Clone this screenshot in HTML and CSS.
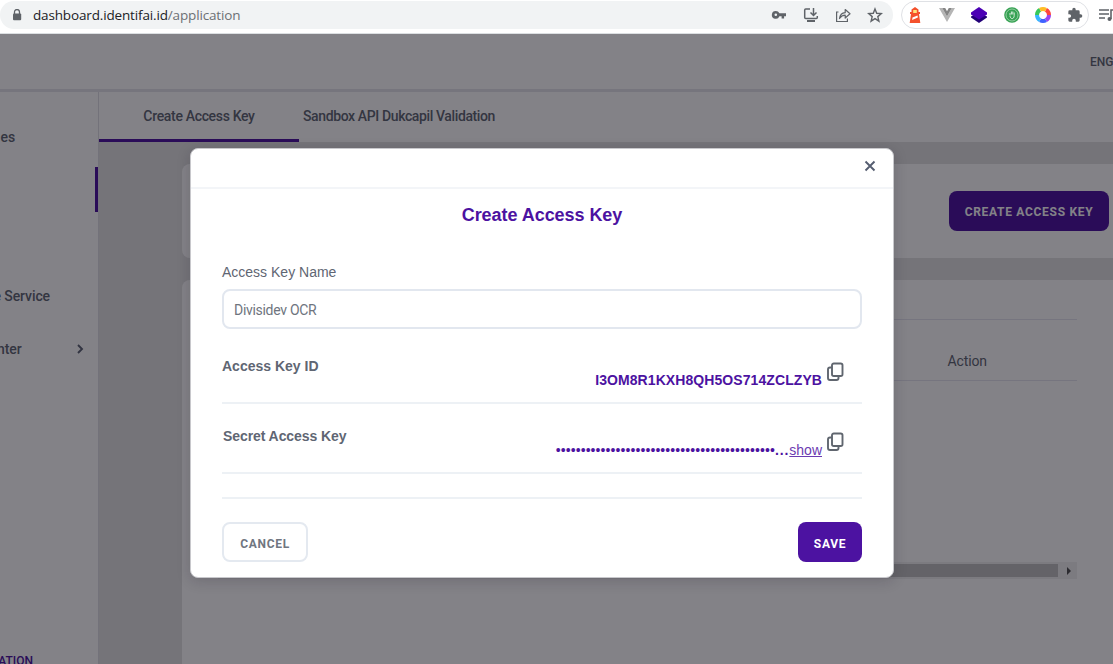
FILE: index.html
```html
<!DOCTYPE html>
<html lang="en">
<head>
  <meta charset="UTF-8">
  <meta name="viewport" content="width=device-width, initial-scale=1.0">
  <title>Create Access Key</title>
  <link rel="stylesheet" href="styles.css">
</head>
<body>
  <div class="browser-bar">
    <div class="address">
      <svg class="lock" width="10" height="12" viewBox="0 0 10 12"><path d="M2.500 5V3a2.500 2.500 0 0 1 5 0v2" fill="none" stroke="#5f6368" stroke-width="1.300"/><rect x="1" y="4.500" width="8.200" height="6.800" rx="1" fill="#5f6368"/></svg>
      <span class="url">dashboard.identifai.id<span class="path">/application</span></span>
      <div class="address-icons">
        <svg width="16" height="16" viewBox="0 0 16 16"><path fill="#5f6368" fill-rule="evenodd" d="M4.800 4a3.900 3.900 0 1 0 3.600 5.200h2.200V11.500h2.500V9.200H15V6.200H8.400A3.900 3.900 0 0 0 4.800 4zm0 2.500a1.300 1.300 0 1 1 0 2.600 1.300 1.300 0 0 1 0-2.600z"/></svg>
        <svg width="16" height="16" viewBox="0 0 16 16" fill="none" stroke="#5f6368" stroke-width="1.500"><path d="M7 2H2.700Q1.700 2 1.700 3v7.500q0 1 1 1h10.600q1 0 1-1V9"/><path d="M10.500 1v7M7.500 5.500l3 3 3-3"/><path d="M4 14h8" stroke-width="2"/></svg>
        <svg width="16" height="16" viewBox="0 0 16 16" fill="none" stroke="#5f6368" stroke-width="1.200"><path d="M3.500 5H1.600v9.500h10.800v-3"/><path d="M4.500 11.500C5 7.800 7 6 10.200 5.700V2.500L15 6.800l-4.800 4.200V8.200C7.500 8.200 6 9.200 4.500 11.500z" stroke-linejoin="round"/></svg>
        <svg width="16" height="16" viewBox="0 0 16 16"><path fill="none" stroke="#5f6368" stroke-width="1.400" d="M8 2l1.700 4.300 4.600.3-3.500 3 1.100 4.500L8 11.600l-3.900 2.500 1.100-4.500-3.500-3 4.600-.3z"/></svg>
      </div>
    </div>
    <div class="extensions">
      <svg width="16" height="18" viewBox="0 0 16 18"><path fill="#f4512c" d="M8 1l3.500 2.500V6H13v2h-1l1.300 9H2.700L4 8H3V6h1.500V3.500z"/><path fill="#ffe27a" d="M6.200 4h3.600v3H6.200z"/><path fill="#fff" d="M5.500 11.500l5-2 .4 2-5.800 2.500z"/></svg>
      <svg width="16" height="16" viewBox="0 0 16 16"><path fill="#b5b5b5" d="M0 1h3.200L8 9.500 12.800 1H16L8 15z"/><path fill="#858585" d="M3.200 1h3L8 4.200 9.800 1h3L8 9.500z"/></svg>
      <svg width="18" height="18" viewBox="0 0 18 18"><path fill="#230078" d="M1 10.500l3-1.500h10l3 1.500v1L9 17l-8-5.500z"/><path fill="#4b00b5" d="M9 1l8 5.500v2L9 13.500 1 8.500v-2z"/></svg>
      <svg width="16" height="16" viewBox="0 0 16 16"><circle cx="8" cy="8" r="7.800" fill="#35a152"/><circle cx="8" cy="8" r="6" fill="none" stroke="#b9e0c2" stroke-width="0.700"/><path d="M6 8V6M7.400 7.500v-3M8.800 7.500v-3M10.200 8.500V5.500M6 8.500c0 4 4.200 4.200 4.200 0" fill="none" stroke="#e4f4e8" stroke-width="0.900"/></svg>
      <svg width="16" height="16" viewBox="0 0 16 16" fill="none" stroke-width="4"><circle cx="8" cy="8" r="6" stroke="#ff453c" pathLength="6" stroke-dasharray="1 5" stroke-dashoffset="1"/><circle cx="8" cy="8" r="6" stroke="#9a45ee" pathLength="6" stroke-dasharray="1 5"/><circle cx="8" cy="8" r="6" stroke="#3f62ff" pathLength="6" stroke-dasharray="1 5" stroke-dashoffset="-1"/><circle cx="8" cy="8" r="6" stroke="#36b5ff" pathLength="6" stroke-dasharray="1 5" stroke-dashoffset="-2"/><circle cx="8" cy="8" r="6" stroke="#37c85a" pathLength="6" stroke-dasharray="1 5" stroke-dashoffset="-3"/><circle cx="8" cy="8" r="6" stroke="#ffbd24" pathLength="6" stroke-dasharray="1 5" stroke-dashoffset="-4"/></svg>
      <svg width="16" height="16" viewBox="0 0 24 24"><path fill="#5f6368" d="M20.500 11H19V7a2 2 0 0 0-2-2h-4V3.500a2.500 2.500 0 0 0-5 0V5H4a2 2 0 0 0-2 2v3.800h1.500a2.700 2.700 0 0 1 0 5.400H2V20a2 2 0 0 0 2 2h3.800v-1.500a2.700 2.700 0 0 1 5.400 0V22H17a2 2 0 0 0 2-2v-4h1.500a2.500 2.500 0 0 0 0-5z"/></svg>
    </div>
    <svg class="playlist" width="15" height="14" viewBox="0 0 15 14"><path d="M0 2h10M0 6h10M0 10h6" stroke="#5f6368" stroke-width="1.600"/><circle cx="10.500" cy="11" r="2" fill="#5f6368"/><path d="M12 11V2h3" fill="none" stroke="#5f6368" stroke-width="1.600"/></svg>
  </div>

  <div class="app">
    <header class="header"><span>ENG</span></header>
    <div class="layout">
      <aside class="sidebar">
        <div class="menu-item services">es</div>
        <div class="menu-active"></div>
        <div class="menu-item online">e Service</div>
        <div class="menu-item center">
          <span>nter</span>
          <svg width="8" height="10" viewBox="0 0 8 10"><path d="M2 1l4 4-4 4" fill="none" stroke="#5d6374" stroke-width="1.900"/></svg>
        </div>
        <div class="menu-heading">ATION</div>
      </aside>
      <main class="main">
        <nav class="tabs">
          <a class="tab active"><span>Create Access Key</span></a>
          <a class="tab second"><span>Sandbox API Dukcapil Validation</span></a>
        </nav>
        <div class="content">
          <section class="card top-card">
            <button class="btn create">CREATE ACCESS KEY</button>
          </section>
          <section class="card table-card">
            <div class="table-head"><span>Action</span></div>
            <div class="scrollbar"><div class="thumb"></div><i class="arrow"></i></div>
          </section>
        </div>
      </main>
    </div>

    <div class="backdrop">
      <div class="modal">
        <div class="modal-header">
          <svg width="12" height="12" viewBox="0 0 12 12"><path d="M1.500 1.500l9 9M10.500 1.500l-9 9" stroke="#555d70" stroke-width="1.900"/></svg>
        </div>
        <div class="modal-body">
          <h2>Create Access Key</h2>
          <label for="keyName">Access Key Name</label>
          <input type="text" id="keyName" value="Divisidev OCR">
          <div class="key-row">
            <strong>Access Key ID</strong>
            <div class="key-value">
              <span class="key-id">I3OM8R1KXH8QH5OS714ZCLZYB</span>
              <svg class="copy" width="18" height="20" viewBox="0 0 18 20" fill="none" stroke="#60666f" stroke-width="1.900"><rect x="6" y="1.500" width="10.500" height="12.500" rx="1.800"/><path d="M6 5.500H4Q2 5.500 2 7.500V16Q2 18 4 18h6.500Q12.500 18 12.500 16V14"/></svg>
            </div>
          </div>
          <div class="key-row secret">
            <strong>Secret Access Key</strong>
            <div class="key-value">
              <span class="dots">••••••••••••••••••••••••••••••••••••••••••••</span><span class="ellipsis">...</span><a class="show">show</a>
              <svg class="copy" width="18" height="20" viewBox="0 0 18 20" fill="none" stroke="#60666f" stroke-width="1.900"><rect x="6" y="1.500" width="10.500" height="12.500" rx="1.800"/><path d="M6 5.500H4Q2 5.500 2 7.500V16Q2 18 4 18h6.500Q12.500 18 12.500 16V14"/></svg>
            </div>
          </div>
          <div class="modal-footer">
            <button class="btn cancel">CANCEL</button>
            <button class="btn save">SAVE</button>
          </div>
        </div>
      </div>
    </div>
  </div>
</body>
</html>
```
FILE: styles.css
```css
* {
  box-sizing: border-box;
}

body {
  margin: 0;
  height: 664px;
  overflow: hidden;
  font-family: Roboto, "Liberation Sans", sans-serif;
  font-size: 14px;
  color: #5f6673;
  background: #fff;
}

svg {
  display: block;
  flex-shrink: 0;
}

.browser-bar {
  height: 34px;
  padding-top: 1px;
  display: flex;
  align-items: flex-start;
  border-bottom: 1px solid #dcdfe2;
}

.address {
  width: 893px;
  flex-shrink: 0;
  height: 28px;
  padding: 0 10px 0 12px;
  display: flex;
  align-items: center;
  background: #f1f3f4;
  border-radius: 14px;
}

.url {
  margin-left: 11px;
  font-family: "Open Sans", "Noto Sans", sans-serif;
  font-size: 13.5px;
  letter-spacing: -0.15px;
  color: #202124;
}

.path {
  color: #6c7075;
}

.address-icons {
  margin-left: auto;
  display: flex;
  gap: 16px;
}

.extensions {
  width: 188px;
  flex-shrink: 0;
  height: 28px;
  margin-left: 8px;
  padding: 0 5px;
  display: flex;
  align-items: center;
  justify-content: space-between;
  border: 1px solid #dfe1e5;
  border-radius: 14px;
}

.playlist {
  margin: 7px 0 0 10px;
}

.app {
  position: relative;
  height: 630px;
  overflow: hidden;
}

.header {
  height: 58px;
  padding: 21px 0 0 1090px;
  border-bottom: 3px solid #e5e5eb;
  font-size: 12px;
  font-weight: 500;
  line-height: 14px;
}

.layout {
  display: flex;
  height: 572px;
}

.sidebar {
  width: 99px;
  flex-shrink: 0;
  overflow: hidden;
  border-right: 1px solid #dedee4;
  display: flex;
  flex-direction: column;
}

.menu-item {
  height: 20px;
  flex-shrink: 0;
  line-height: 20px;
  font-weight: 500;
  letter-spacing: -0.1px;
  white-space: nowrap;
  display: flex;
}

.services {
  width: 15px;
  margin-top: 35px;
  justify-content: flex-end;
}

.menu-active {
  width: 3px;
  height: 45px;
  flex-shrink: 0;
  margin-top: 20px;
  align-self: flex-end;
  background: #4c12a1;
}

.online {
  width: 50px;
  margin-top: 74px;
  justify-content: flex-end;
}

.center {
  margin: 33px 14px 0 -3px;
  align-items: center;
  justify-content: space-between;
}

.menu-heading {
  width: 33px;
  margin-top: 295px;
  display: flex;
  justify-content: flex-end;
  font-size: 12px;
  font-weight: 500;
  line-height: 14px;
  color: #4c12a1;
}

.main {
  flex: 1;
  min-width: 0;
  background: #e3e3e3;
}

.tabs {
  height: 50px;
  display: flex;
  background: #fff;
}

.tab {
  width: 200px;
  line-height: 49px;
  font-weight: 500;
  letter-spacing: -0.33px;
  text-align: center;
  white-space: nowrap;
}

.tab.active {
  border-bottom: 3px solid #4c12a1;
}

.tab.second {
  text-align: left;
  padding-left: 4px;
  letter-spacing: -0.38px;
}

.content {
  padding: 22px 0 0 83px;
}

.card {
  background: #fff;
  border-radius: 8px 0 0 8px;
}

.top-card {
  height: 94px;
  padding: 27px 4px 0 0;
  display: flex;
  justify-content: flex-end;
}

.btn {
  height: 40px;
  padding: 2px 0 0;
  border: none;
  border-radius: 8px;
  font-family: Roboto, sans-serif;
  font-size: 12px;
  font-weight: 700;
  letter-spacing: 0.7px;
  cursor: pointer;
}

.create {
  width: 160px;
  color: #fff;
  background: #4c12a1;
}

.table-card {
  height: 400px;
  margin-top: 22px;
  padding: 39px 36px 0 36px;
}

.table-head {
  height: 62px;
  padding: 32px 90px 0 0;
  line-height: 18px;
  text-align: right;
  letter-spacing: -0.1px;
  border-top: 1px solid #e4e4ee;
  border-bottom: 1px solid #e4e4ee;
}

.scrollbar {
  height: 17px;
  margin-top: 181px;
  display: flex;
  align-items: center;
  background: #f1f1f1;
}

.thumb {
  width: 840px;
  height: 13px;
  background: #c1c1c1;
}

.arrow {
  margin-left: 9px;
  border-left: 4px solid #505050;
  border-top: 4px solid transparent;
  border-bottom: 4px solid transparent;
}

.backdrop {
  position: absolute;
  inset: 0;
  display: flex;
  justify-content: center;
  align-items: flex-start;
  padding: 114px 29px 0 0;
  background: rgba(7, 5, 15, 0.5);
}

.modal {
  width: 704px;
  height: 430px;
  background: #fff;
  border: 1px solid #c8c8cc;
  border-radius: 8px;
  box-shadow: 0 3px 14px rgba(20, 15, 35, 0.18);
}

.modal-header {
  height: 40px;
  padding: 11px 17px 0 0;
  display: flex;
  justify-content: flex-end;
  border-bottom: 2px solid #f3f5f8;
}

.modal-body {
  padding: 0 31px;
  font-family: "Liberation Sans", Arial, sans-serif;
  line-height: 20px;
}

.modal-body h2 {
  margin: 16px 0 0;
  font-size: 18px;
  line-height: 20px;
  letter-spacing: -0.05px;
  text-align: center;
  color: #4c12a1;
}

.modal-body label {
  display: block;
  margin-top: 37px;
}

.modal-body input {
  display: block;
  width: 640px;
  height: 40px;
  margin-top: 7px;
  padding: 1px 10px 0;
  border: 2px solid #e2e7ef;
  border-radius: 8px;
  font-family: Roboto, sans-serif;
  font-size: 14px;
  letter-spacing: -0.3px;
  color: #6e747e;
}

.key-row {
  height: 75px;
  padding-top: 27px;
  display: flex;
  justify-content: space-between;
  border-bottom: 2px solid #edf1f5;
}

.secret {
  height: 70px;
  padding-top: 22px;
}

.secret strong {
  padding-left: 1px;
  letter-spacing: -0.08px;
}

.key-value {
  display: flex;
  padding-right: 18px;
  color: #4c12a1;
}

.key-id,
.dots,
.ellipsis,
.show {
  margin-top: 14px;
}

.key-id {
  font-weight: 700;
  letter-spacing: 0.08px;
}

.dots {
  letter-spacing: 0.08px;
}

.ellipsis {
  font-weight: 700;
  letter-spacing: 0.9px;
}

.show {
  text-decoration: underline;
  color: #6b3bb1;
}

.copy {
  margin: 6px 0 0 4px;
}

.modal-footer {
  margin-top: 23px;
  padding-top: 23px;
  display: flex;
  justify-content: space-between;
  border-top: 2px solid #edf1f5;
}

.cancel,
.save {
  padding-top: 4px;
}

.cancel {
  width: 86px;
  color: #707680;
  background: #fff;
  border: 2px solid #e4e9f0;
}

.save {
  width: 64px;
  color: #fff;
  background: #4c12a1;
}
```
